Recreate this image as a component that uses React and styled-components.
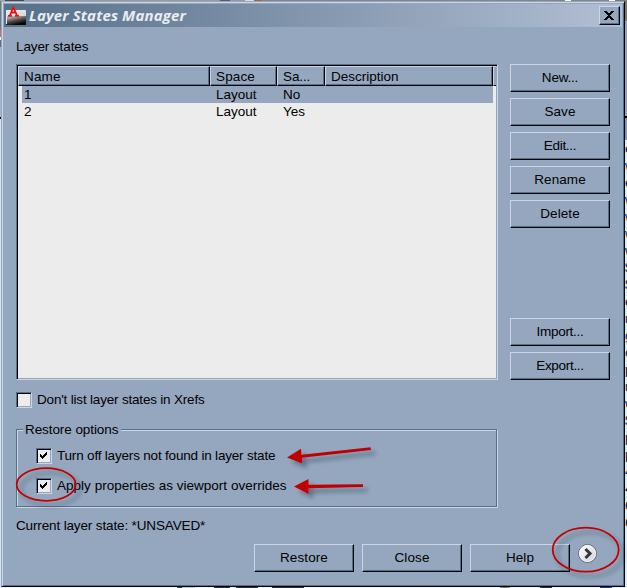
import React from 'react';
import styled, { createGlobalStyle } from 'styled-components';

const FACE = '#95a7be';
const LIGHT = '#cbd5e5';
const SHADOW = '#566f8c';
const PAPER = '#ececec';

const states = [
  { name: '1', space: 'Layout', same: 'No', selected: true },
  { name: '2', space: 'Layout', same: 'Yes' },
];

const cells = ['e', 'w', 'e', 'w', 'w', 'w', 'w', '$', '$', 'e', 'r', 'g', 'c', 'p', 'm', 'w', '$', 'p', 'p', '4', '4', '6', '6'];

function App() {
  return (
    <Desktop>
      <GlobalStyle />
      <Dialog>
        <TitleBar>
          <AppIcon />
          <Title>Layer States Manager</Title>
          <CloseButton aria-label="Close window">
            <svg width="10" height="9" viewBox="0 0 10 9" shapeRendering="crispEdges">
              <path d="M0 0h3v1h1v1h2v-1h1v-1h3v1h-1v1h-1v1h-1v1h-1v1h1v1h1v1h1v1h1v1h-3v-1h-1v-1h-2v1h-1v1h-3v-1h1v-1h1v-1h1v-1h1v-1h-1v-1h-1v-1h-1v-1h-1z" />
            </svg>
          </CloseButton>
        </TitleBar>
        <Body>
          <Heading>
            <Text $spacing={-0.1}>Layer states</Text>
          </Heading>
          <Main>
            <List>
              <HeaderRow>
                <HeaderCell><Text $spacing={0.15}>Name</Text></HeaderCell>
                <HeaderCell><Text $spacing={0.15}>Space</Text></HeaderCell>
                <HeaderCell><Text $spacing={-0.1}>Sa...</Text></HeaderCell>
                <HeaderCell><Text>Description</Text></HeaderCell>
                <HeaderEnd />
              </HeaderRow>
              {states.map((s) => (
                <Row key={s.name} $selected={s.selected}>
                  <Text>{s.name}</Text>
                  <Text>{s.space}</Text>
                  <Text>{s.same}</Text>
                </Row>
              ))}
            </List>
            <Side>
              <Button $spacing={-0.2}>New...</Button>
              <Button>Save</Button>
              <Button $spacing={-0.3}>Edit...</Button>
              <Button>Rename</Button>
              <Button>Delete</Button>
              <Gap />
              <Button $spacing={-0.3}>Import...</Button>
              <Button $spacing={-0.3}>Export...</Button>
            </Side>
          </Main>
          <XrefOption>
            <CheckBox />
            <Text $spacing={-0.19}>Don't list layer states in Xrefs</Text>
          </XrefOption>
          <Group>
            <Legend><Text $spacing={-0.08}>Restore options</Text></Legend>
            <Option>
              <CheckBox checked />
              <Text $spacing={-0.19}>Turn off layers not found in layer state</Text>
            </Option>
            <Option>
              <CheckBox checked />
              <Text $spacing={0.02}>Apply properties as viewport overrides</Text>
            </Option>
          </Group>
          <Current><Text $spacing={-0.14}>Current layer state: *UNSAVED*</Text></Current>
          <Footer>
            <Button>Restore</Button>
            <Button>Close</Button>
            <Button>Help</Button>
            <Expand />
          </Footer>
        </Body>
      </Dialog>
      <SheetEdge>
        {cells.map((c, i) => <span key={i}>{c}</span>)}
      </SheetEdge>
      <Markup />
    </Desktop>
  );
}

function AppIcon() {
  return (
    <svg width="20" height="21" viewBox="0 0 20 21">
      <defs>
        <linearGradient id="metal" x1="0.2" y1="0" x2="0.5" y2="1">
          <stop offset="0" stopColor="#eee" />
          <stop offset="0.45" stopColor="#aaa" />
          <stop offset="0.75" stopColor="#444" />
          <stop offset="1" stopColor="#000" />
        </linearGradient>
      </defs>
      <path d="M0 5h20v15H0z" fill="url(#metal)" />
      <path d="M.5 19V5.500H19" fill="none" stroke="#e6e6e6" />
      <path d="M0 6h20v5H0z" fill="#e8e8e8" opacity=".8" />
      <path d="M2 10.800h4M4 10.500L7.500 1.500M7 1.500L11 10.500M9 10.800h4M5 7.500h5" fill="none" stroke="#f00f0f" strokeWidth="1.800" />
    </svg>
  );
}

function CheckBox({ checked }) {
  return (
    <Box>
      {checked && (
        <svg width="7" height="7" viewBox="0 0 7 7" shapeRendering="crispEdges">
          <path d="M0 2h1v1h1v1h1v-1h1v-1h1v-1h1v-1h1v3h-1v1h-1v1h-1v1h-1v1h-1v-1h-1v-1h-1z" />
        </svg>
      )}
    </Box>
  );
}

function Expand() {
  return (
    <ExpandButton aria-label="More">
      <svg width="20" height="20" viewBox="0 0 20 20">
        <defs>
          <linearGradient id="knob" x1="0" y1="0" x2="1" y2="1">
            <stop offset="0" stopColor="#fff" />
            <stop offset="1" stopColor="#cfd1d8" />
          </linearGradient>
        </defs>
        <circle cx="9.500" cy="9.500" r="9" fill="url(#knob)" stroke="#626b78" strokeWidth="1" />
        <circle cx="9.500" cy="9.500" r="8" fill="none" stroke="#f4f5f7" strokeWidth="1" />
        <path d="M7.500 5L12 9.500L7.500 14" fill="none" stroke="#35373d" strokeWidth="3" />
      </svg>
    </ExpandButton>
  );
}

// Red pen marks drawn over the dialog
function Markup() {
  return (
    <Overlay width="627" height="588" viewBox="0 0 627 588">
      <defs>
        <filter id="drop" x="-20%" y="-50%" width="150%" height="220%">
          <feDropShadow dx="4.500" dy="4.500" stdDeviation="2" floodColor="#1c2836" floodOpacity="0.42" />
        </filter>
      </defs>
      <g filter="url(#drop)">
        <ellipse cx="46.200" cy="484.500" rx="29.500" ry="16.300" fill="none" stroke="#c00000" strokeWidth="1.800" />
        <ellipse cx="585.700" cy="549.700" rx="33" ry="22" fill="none" stroke="#c00000" strokeWidth="1.800" />
        <path d="M287 457.500L301 448.800L301.500 454.700L370.500 447.300L371 450L302 457.800L302.300 463.500Z" fill="#c00000" />
        <path d="M294 486.500L308.500 479L308.500 484.700L363 484.200L363 487L308.500 488.200L308.700 494Z" fill="#c00000" />
      </g>
    </Overlay>
  );
}

const GlobalStyle = createGlobalStyle`
  * {
    box-sizing: border-box;
  }

  body {
    margin: 0;
    overflow: hidden;
    font: 13.5px/16px 'Liberation Sans', Arial, sans-serif;
    color: #000;
  }
`;

const Desktop = styled.div`
  position: relative;
  display: flex;
  width: 627px;
  height: 588px;
  padding: 1px 0 1px 1px;
  overflow: hidden;
  background:
    linear-gradient(90deg, #a5a5a5 0 5px, #45484f 5px 24px, #9a9a9a 24px 220px, #535b6c 220px 230px, #999 230px 245px, #ddd 245px 254px, #a96235 254px 262px, #858585 262px 565px, #fff 565px 571px, #858585 571px 609px, #fff 609px 615px, #777 615px) 0 0 / 627px 1px no-repeat,
    linear-gradient(90deg, #e4f3fc 0 177px, #33414e 177px 182px, #b8c8d3 182px 195px, #e4f3fc 195px 214px, #263440 214px 230px, #e4f3fc 230px 236px, #263440 236px 258px, #e4f3fc 258px 272px, #263440 272px 304px, #e4f3fc 304px 500px, #997d66 500px 510px, #e4f3fc 510px 540px, #263440 540px 552px, #e4f3fc 552px 600px, #263d86 600px 612px, #e4f3fc 612px) 0 587px / 627px 1px no-repeat,
    linear-gradient(#777 0 30px, #d36c5c 30px 37px, #f2f2f2 37px 40px, #53718f 40px 47px, #a5b6ca 47px 117px, #000 117px 119px, #d5e4ed 119px) 0 0 / 1px 588px no-repeat,
    #d5effc;
`;

const Dialog = styled.div`
  display: flex;
  flex: none;
  flex-direction: column;
  width: 624px;
  height: 586px;
  padding: 2px;
  border: 1px solid ${FACE};
  border-right-color: #000;
  border-bottom-color: #000;
  background: ${FACE};
  box-shadow: inset 1px 1px ${LIGHT}, inset -1px -1px ${SHADOW};
`;

const TitleBar = styled.div`
  display: flex;
  align-items: center;
  flex: none;
  height: 23px;
  padding: 0 2px;
  background: linear-gradient(90deg, #567089, #b2bed4);
`;

const Title = styled.h1`
  flex: 1;
  margin: -2px 0 0 3px;
  font: italic 700 15px/22px 'Open Sans', sans-serif;
  letter-spacing: 0.12px;
  white-space: nowrap;
  color: #e8edf0;
`;

const CloseButton = styled.button`
  display: flex;
  align-items: center;
  justify-content: center;
  width: 21px;
  height: 19px;
  padding: 0 1px 0 0;
  border: 1px solid ${LIGHT};
  border-right-color: #000;
  border-bottom-color: #000;
  background: ${FACE};
  box-shadow: inset -1px -1px ${SHADOW};
`;

const Body = styled.div`
  display: flex;
  flex-direction: column;
  padding: 0 12px;
`;

const Heading = styled.div`
  height: 37px;
  padding-top: 12px;
`;

const Text = styled.span`
  display: block;
  white-space: nowrap;
  letter-spacing: ${({ $spacing = 0 }) => $spacing}px;
`;

const Main = styled.div`
  display: flex;
  gap: 12px;
  height: 316px;
`;

const List = styled.div`
  width: 482px;
  padding: 1px;
  border: 1px solid ${SHADOW};
  border-right-color: ${LIGHT};
  border-bottom-color: ${LIGHT};
  background: ${PAPER};
  box-shadow: inset 1px 1px #000, inset -1px -1px ${FACE};
`;

const HeaderRow = styled.div`
  display: grid;
  grid-template-columns: 192px 67px 48px 168px 3px;
  height: 20px;
`;

const HeaderCell = styled.div`
  padding: 2px 0 0 5px;
  border: 1px solid ${LIGHT};
  border-right-color: #000;
  border-bottom-color: #000;
  background: ${FACE};
  box-shadow: inset -1px -1px ${SHADOW};
`;

const HeaderEnd = styled.div`
  border: 1px solid ${LIGHT};
  border-right: 0;
  border-bottom-color: #000;
  background: ${FACE};
`;

const Row = styled.div`
  display: grid;
  grid-template-columns: 192px 67px 1fr;
  height: 17px;
  margin: 0 3px 0 4px;
  padding: 1px 0 0 2px;
  background: ${({ $selected }) => ($selected ? FACE : 'transparent')};
`;

const Side = styled.div`
  display: flex;
  flex-direction: column;
  gap: 6px;
`;

const Gap = styled.div`
  flex: 1;
`;

const Button = styled.button`
  flex: none;
  width: 100px;
  height: 28px;
  padding: 0;
  border: 1px solid ${LIGHT};
  border-right-color: #000;
  border-bottom-color: #000;
  background: ${FACE};
  box-shadow: inset -1px -1px ${SHADOW};
  font: inherit;
  letter-spacing: ${({ $spacing = 0.1 }) => $spacing}px;
  color: #000;
`;

const XrefOption = styled.label`
  display: flex;
  gap: 5px;
  height: 37px;
  margin-top: 12px;
`;

const Box = styled.span`
  display: flex;
  align-items: center;
  justify-content: center;
  flex: none;
  width: 16px;
  height: 16px;
  padding: 0 1px 1px 0;
  border: 1px solid ${SHADOW};
  border-right-color: ${LIGHT};
  border-bottom-color: ${LIGHT};
  background: ${PAPER};
  box-shadow: inset 1px 1px #000, inset -1px -1px ${FACE};
`;

const Group = styled.fieldset`
  width: 481px;
  height: 86px;
  margin: -8px 0 0;
  padding: 11px 0 0 19px;
  border: 1px solid ${SHADOW};
  box-shadow: 1px 1px ${LIGHT}, inset 1px 1px ${LIGHT};
`;

const Legend = styled.legend`
  height: 16px;
  margin-left: -13px;
  padding: 1px 3px 0 2px;
  background: ${FACE};
`;

const Option = styled.label`
  display: flex;
  gap: 5px;
  height: 30px;
`;

const Current = styled.div`
  height: 26px;
  margin-top: 11px;
`;

const Footer = styled.div`
  display: flex;
  gap: 8px;
  padding-left: 238px;
`;

const ExpandButton = styled.button`
  width: 20px;
  height: 20px;
  padding: 0;
  border: 0;
  background: none;
`;

const SheetEdge = styled.div`
  display: flex;
  flex: none;
  flex-direction: column;
  width: 2px;
  height: 586px;
  padding-top: 139px;
  overflow: hidden;
  background: linear-gradient(#777 0 20px, #8fa3bd 20px 115px, #000 115px 117px, #8297b1 117px 139px, transparent 139px);
  line-height: 17px;
  color: #10243f;
`;

const Overlay = styled.svg`
  position: absolute;
  top: 0;
  left: 0;
  pointer-events: none;
`;

export default App;
